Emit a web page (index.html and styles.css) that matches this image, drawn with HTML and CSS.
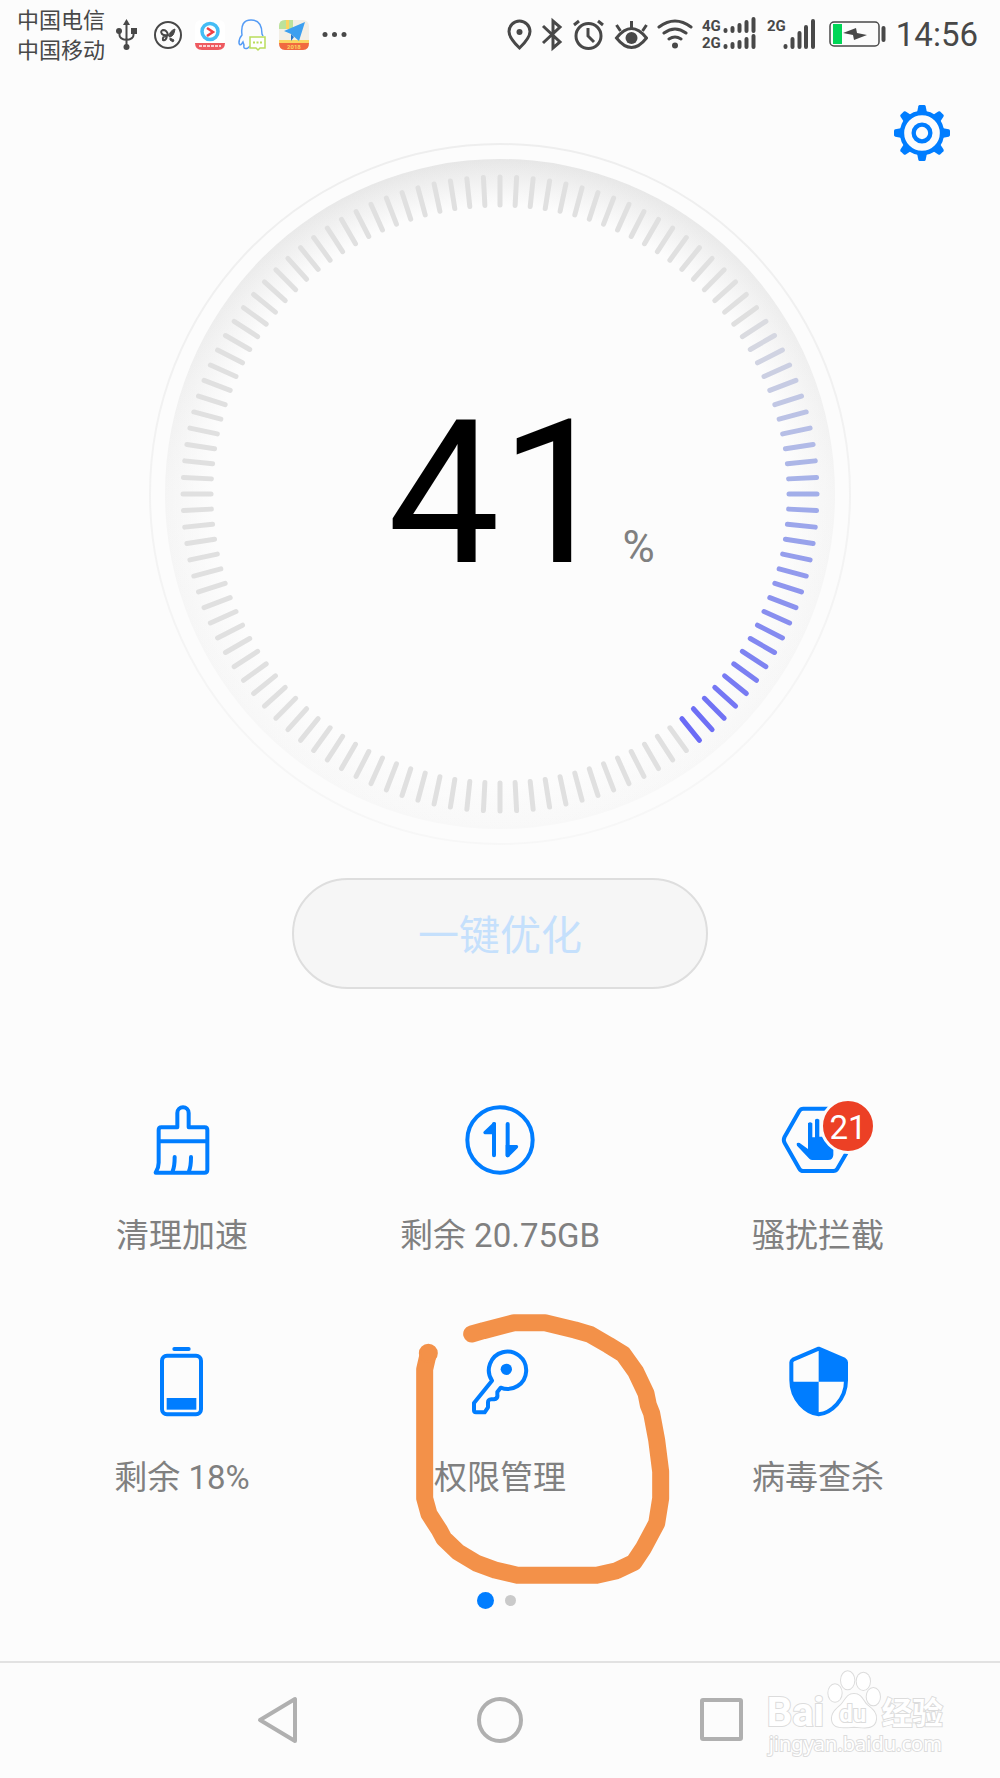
FILE: index.html
```html
<!DOCTYPE html>
<html lang="zh-CN">
<head>
    <meta charset="UTF-8">
    <meta name="viewport" content="width=device-width, initial-scale=1.0">
    <title>手机管家</title>
    <link rel="stylesheet" href="styles.css">
</head>
<body>
    <header class="status-bar">
        <div class="status-left">
            <div class="carrier">
                <span>中国电信</span>
                <span>中国移动</span>
            </div>
            <!-- usb -->
            <svg width="27" height="36" viewBox="115 16 27 36" fill="none" stroke="#484848" stroke-width="2">
                <path d="M126.500 22v24M119.500 30v4q0 4 7 5M133.500 30v4q0 4-7 5"/>
                <path d="M126.500 18l3.500 6h-7z" fill="#484848" stroke="none"/>
                <circle cx="126.500" cy="46" r="3" fill="#484848" stroke="none"/>
                <circle cx="119" cy="30" r="3" fill="#484848" stroke="none"/>
                <path d="M131 27h6v6h-6z" fill="#484848" stroke="none"/>
            </svg>
            <!-- butterfly -->
            <svg width="32" height="36" viewBox="152 16 32 36" fill="none" stroke="#484848">
                <circle cx="168" cy="34" r="13" stroke-width="2"/>
                <path d="M168 34q-1-5-5-5-3 1-1 4 2 2 6 1zM167 35q-5 0-4 4 3 1 4-4z" stroke-width="2"/>
                <path d="M175 28q-6 2-6 8 5 0 6-8zM170 37l4 2-1 2-3-2z" fill="#484848" stroke-width="1"/>
            </svg>
            <!-- video app -->
            <svg width="32" height="36" viewBox="194 16 32 36">
                <rect x="195" y="19" width="30" height="30" rx="6" fill="#fff"/>
                <circle cx="210" cy="30.500" r="8" fill="#fff" stroke="#45bdf5" stroke-width="3.500"/>
                <path d="M207 27l6 4-6 4" fill="none" stroke="#f04046" stroke-width="2.500"/>
                <path d="M195 42h30q0 7-7 7h-16q-7 0-7-7z" fill="#ee5a60"/>
                <path d="M199 45h22" stroke="#fbd0d2" stroke-width="2" stroke-dasharray="3 1"/>
            </svg>
            <!-- chat app -->
            <svg width="32" height="36" viewBox="236 16 32 36" fill="none">
                <path d="M248 47q-5 2-4-3l-1-3q-3 5-4 1 0-5 3-8-2-15 9-15t11 14l1 2M248 47l2-2" stroke="#559cf5" stroke-width="1.500"/>
                <path d="M250 36h15v11h-5l-2 2-2-2h-6z" fill="#fff" stroke="#b9dd5c" stroke-width="1.500"/>
                <path d="M253 41.500h9" stroke="#b9dd5c" stroke-width="2" stroke-dasharray="2 1.500"/>
            </svg>
            <!-- map app -->
            <svg width="32" height="36" viewBox="277 16 32 36">
                <rect x="278" y="19" width="30" height="30" rx="6" fill="#f3efe6"/>
                <path d="M278 28v-3q0-6 6-6h8v9z" fill="#bce29b"/>
                <path d="M278 39h30v3h-30zM285 19h3v9h-3z" fill="#fbd561"/>
                <path d="M278 42h30q0 7-6 7h-18q-6 0-6-7z" fill="#f16a3f"/>
                <path d="M304 21l-21 9 7 3 8 7z" fill="#3c9ff0"/>
                <path d="M290 33v7l3-4z" fill="#2675c8"/>
                <text class="tiny-year" x="286" y="48">2018</text>
            </svg>
            <svg width="32" height="36" viewBox="320 16 32 36" fill="#484848">
                <circle cx="325" cy="33.500" r="2.500"/><circle cx="334.500" cy="33.500" r="2.500"/><circle cx="344" cy="33.500" r="2.500"/>
            </svg>
        </div>

        <div class="status-right">
            <!-- location -->
            <svg width="26" height="36" viewBox="506 16 26 36" fill="none" stroke="#484848" stroke-width="3">
                <path d="M519.500 47q-10.500-10-10.500-16.500a10.500 10.500 0 0 1 21 0q0 6.500-10.500 16.500z"/>
                <circle cx="519.500" cy="31" r="3" fill="#484848" stroke="none"/>
            </svg>
            <!-- bluetooth -->
            <svg width="24" height="36" viewBox="540 16 24 36" fill="none" stroke="#484848" stroke-width="3">
                <path d="M543 25l17 16-7 6V20l7 6-17 16"/>
            </svg>
            <!-- alarm -->
            <svg width="34" height="36" viewBox="572 16 34 36" fill="none" stroke="#484848" stroke-width="3">
                <circle cx="588.500" cy="35" r="12.500"/>
                <path d="M588 27v8l6 6M574 24l5-4M598 20l5 4"/>
            </svg>
            <!-- eye comfort -->
            <svg width="34" height="36" viewBox="614 16 34 36" fill="none" stroke="#484848" stroke-width="3">
                <path d="M616.500 37q15-19 30 0-15 19-30 0z"/>
                <circle cx="631.500" cy="37" r="6" fill="#484848" stroke="none"/>
                <path d="M631.500 20v7M616.500 24l4 6M646.500 24l-4 6"/>
            </svg>
            <!-- wifi -->
            <svg width="38" height="36" viewBox="656 16 38 36" fill="none" stroke="#484848" stroke-width="3" stroke-linecap="round">
                <path d="M659 26q16-12 32 0M664 32q11-8 22 0M669 38q6-4 12 0"/>
                <circle cx="675" cy="44.500" r="3" fill="#484848" stroke="none"/>
            </svg>
            <!-- sim 1 and 2 -->
            <svg width="56" height="36" viewBox="702 16 56 36">
                <text class="net" x="702" y="30">4G</text>
                <text class="net" x="702" y="47">2G</text>
                <path class="bars" d="M725.500 29v1M732.500 27v3M739.500 24v6M746.500 21v9M753.500 18v12M725.500 45v1M732.500 43v3M739.500 41v5M746.500 38v8M753.500 35v11"/>
            </svg>
            <svg width="54" height="36" viewBox="766 16 54 36">
                <text class="net" x="767" y="30">2G</text>
                <path class="bars" d="M785.500 45v1M792.500 38v8M799.500 32v14M806 26v20M813 20v26"/>
            </svg>
            <!-- charging battery -->
            <svg width="60" height="36" viewBox="828 16 60 36">
                <rect x="830" y="21" width="49" height="24" rx="4" fill="none" stroke="#484848" stroke-width="1.500"/>
                <rect x="833" y="23" width="9" height="20" fill="#00d656"/>
                <path d="M843 32l13-5 1 5 10 2-13 5-1-5z" fill="#484848"/>
                <path d="M883.500 27v12" stroke="#484848" stroke-width="4" stroke-linecap="round"/>
            </svg>
            <time class="clock">14:56</time>
        </div>
    </header>

    <main>
        <section class="hero">
            <div class="gauge">
                <svg class="dial" viewBox="-352 -352 704 704">
                    <defs>
                        <linearGradient id="rim" x1="0" y1="0" x2="0" y2="1">
                            <stop offset="0" stop-color="#e6e6e6"/>
                            <stop offset="0.500" stop-color="#f5f5f5"/>
                            <stop offset="1" stop-color="#f8f8f8"/>
                        </linearGradient>
                        <linearGradient id="line" x1="0" y1="0" x2="0" y2="1">
                            <stop offset="0" stop-color="#eeeeee"/>
                            <stop offset="1" stop-color="#f7f7f7"/>
                        </linearGradient>
                        <radialGradient id="core">
                            <stop offset="0.860" stop-color="#fcfcfc"/>
                            <stop offset="1" stop-color="#fcfcfc" stop-opacity="0"/>
                        </radialGradient>
                    </defs>
                    <circle r="350" fill="none" stroke="url(#line)" stroke-width="2"/>
                    <circle r="335" fill="url(#rim)"/>
                    <circle r="336" fill="url(#core)"/>
                    <g id="ticks"></g>
                </svg>
                <div class="score">
                    <span class="score-value">41</span>
                    <span class="score-unit">%</span>
                </div>
            </div>
            <button class="settings" aria-label="设置">
                <svg width="56" height="56" viewBox="102 46 168 168">
                    <g id="teeth" fill="#007dff"></g>
                    <circle cx="186" cy="130" r="60" fill="none" stroke="#007dff" stroke-width="13"/>
                    <circle cx="186" cy="130" r="25" fill="none" stroke="#007dff" stroke-width="13"/>
                </svg>
            </button>
        </section>

        <button class="optimize">一键优化</button>

        <section class="tiles">
            <button class="tile">
                <svg class="icon" viewBox="138 72 216 216">
                    <path d="M232 142v-43a17 17 0 0 1 34 0v43h48q8 0 8 8v119q0 9-9 9H167q9-14 9-30v-98q0-8 8-8zM176 184h146M224 231q0 28-6 42M273 231q0 28-6 42"/>
                </svg>
                <span>清理加速</span>
            </button>
            <button class="tile">
                <svg class="icon" viewBox="1092 72 216 216">
                    <circle cx="1200" cy="180" r="98"/>
                    <path d="M1182 226v-94M1223 132v94"/>
                    <path class="solid" d="M1188 130v33h-34q-7-3-2-9l27-26q6-3 9 2zM1217 228v-33h34q6 3 2 9l-27 27q-6 3-9-3z"/>
                </svg>
                <span>剩余 20.75GB</span>
            </button>
            <button class="tile">
                <span class="icon-wrap">
                    <svg class="icon" viewBox="186 72 216 216">
                        <path d="M250 86h90q8 0 12 7l45 77q5 10 0 19l-45 77q-4 7-12 7h-90q-8 0-12-7l-44-77q-5-9 0-19l44-77q4-7 12-7z"/>
                        <path class="solid" d="M264 207v-77q6-6 13 0v42h8v-53q6-6 13 0v51h8v-45q6-6 13 0v50h8v-25q6-6 13 0v75q-1 15-16 15h-47q-5 0-9-4l-37-39q-4-11 8-8z"/>
                    </svg>
                    <span class="badge">21</span>
                </span>
                <span>骚扰拦截</span>
            </button>
            <button class="tile">
                <svg class="icon" viewBox="138 78 216 216">
                    <rect x="186" y="107" width="117" height="176" rx="15"/>
                    <path d="M223 87h43"/>
                    <path class="solid" d="M200 234h89v35h-89z"/>
                </svg>
                <span>剩余 18%</span>
            </button>
            <button class="tile">
                <svg class="icon" viewBox="192 138 216 216">
                    <path d="M276 242l-54 67v22q0 6 6 6h26l10-15v-12q-1-12 10-12h8q12-2 10-14v-8l10-13a56 56 0 1 0-26-21z"/>
                    <circle class="solid" cx="319" cy="208" r="17"/>
                </svg>
                <span>权限管理</span>
                <svg class="marker" viewBox="0 0 870 960">
                    <path d="M85 160L74 208V595L87 642L118 690L132 716L175 757L230 790L285 810L352 826H590L650 812L702 787L730 745L770 670L782 595V515L770 420L755 340L745 315L738 280L707 215L670 163L625 135L570 103L525 90L435 68H342L250 92L215 102"/>
                    <circle cx="85" cy="160" r="3"/>
                </svg>
            </button>
            <button class="tile">
                <svg class="icon" viewBox="126 78 216 216">
                    <path d="M236 86l77 33q5 3 5 8v54c0 60-46 98-82 102-36-4-82-42-82-102v-54q0-5 5-8z"/>
                    <path class="solid" d="M236 86l82 35v64h-82zM236 185v98c-36-4-80-42-82-98z"/>
                </svg>
                <span>病毒查杀</span>
            </button>
        </section>

        <div class="pager">
            <span class="dot active"></span>
            <span class="dot"></span>
        </div>
    </main>

    <nav class="nav-bar">
        <button aria-label="返回">
            <svg width="52" height="52" viewBox="0 0 52 52"><path d="M43 5v42L8 26z"/></svg>
        </button>
        <button aria-label="主页">
            <svg width="52" height="52" viewBox="0 0 52 52"><circle cx="26" cy="26" r="21"/></svg>
        </button>
        <button aria-label="最近任务">
            <svg width="52" height="52" viewBox="0 0 52 52"><rect x="6" y="6" width="39" height="39" rx="1"/></svg>
        </button>
        <svg class="watermark" viewBox="70 1045 550 270">
            <g class="paw">
                <ellipse cx="285" cy="1120" rx="20" ry="26"/>
                <ellipse cx="323" cy="1082" rx="20" ry="27"/>
                <ellipse cx="370" cy="1085" rx="20" ry="26"/>
                <ellipse cx="400" cy="1131" rx="20" ry="26"/>
                <path d="M342 1123c24 0 26 22 40 34 18 14 28 24 26 42-4 32-38 24-66 22-28 2-62 8-66-20-2-20 12-32 26-44 14-14 18-34 40-34z"/>
            </g>
            <text class="wm-bai" x="80" y="1220">Bai</text>
            <text class="wm-du" x="298" y="1208">du</text>
            <text class="wm-cn" x="425" y="1212">经验</text>
            <text class="wm-url" x="86" y="1294">jingyan.baidu.com</text>
        </svg>
    </nav>

    <script>
        const SVG_NS = 'http://www.w3.org/2000/svg';

        function mix(a, b, t) {
            return 'rgb(' + a.map((v, i) => Math.round(v + (b[i] - v) * t)).join(',') + ')';
        }

        // ticks 18..47 are lit, from grey to violet
        function tickColor(i) {
            if (i < 18 || i > 47) return '#e0e0e0';
            if (i < 30) return mix([223, 223, 223], [162, 174, 233], (i - 18) / 12);
            return mix([162, 174, 233], [107, 107, 246], (i - 30) / 17);
        }

        const ticks = document.getElementById('ticks');
        for (let i = 0; i < 120; i++) {
            const line = document.createElementNS(SVG_NS, 'line');
            line.setAttribute('y1', -317);
            line.setAttribute('y2', -289);
            line.setAttribute('stroke', tickColor(i));
            line.setAttribute('transform', 'rotate(' + i * 3 + ')');
            ticks.appendChild(line);
        }

        const teeth = document.getElementById('teeth');
        for (let i = 0; i < 8; i++) {
            const tooth = document.createElementNS(SVG_NS, 'path');
            tooth.setAttribute('d', 'M179 46h14q3 0 4 4l5 24h-32l5-24q1-4 4-4z');
            tooth.setAttribute('transform', 'rotate(' + i * 45 + ' 186 130)');
            teeth.appendChild(tooth);
        }
    </script>
</body>
</html>
```
FILE: styles.css
```css
* {
    box-sizing: border-box;
}

body {
    margin: 0;
    min-height: 100vh;
    display: flex;
    flex-direction: column;
    background-color: #fcfcfc;
    color: #808080;
    font-family: Roboto, "Noto Sans CJK SC", sans-serif;
}

button {
    padding: 0;
    border: none;
    background: none;
    color: inherit;
    font-family: inherit;
    cursor: pointer;
}

svg {
    display: block;
    flex-shrink: 0;
}

/* status bar */
.status-bar {
    display: flex;
    justify-content: space-between;
    align-items: center;
    height: 69px;
    padding: 0 22px 0 17px;
    color: #484848;
}

.status-left {
    display: flex;
    align-items: center;
    gap: 10px;
}

.status-right {
    display: flex;
    align-items: center;
    gap: 8px;
}

.carrier {
    display: flex;
    flex-direction: column;
    padding-top: 2px;
    font-size: 22px;
    line-height: 30px;
    white-space: nowrap;
}

.clock {
    padding-top: 1px;
    font-size: 33px;
    line-height: 36px;
}

.net {
    font-family: "Liberation Sans Narrow", Roboto, sans-serif;
    font-size: 15px;
    font-weight: bold;
    fill: #484848;
}

.tiny-year {
    font-size: 6px;
    font-weight: bold;
    fill: #fbd561;
}

.bars {
    fill: none;
    stroke: #484848;
    stroke-width: 4;
    stroke-linecap: round;
}

/* score dial, the settings button shares its cell */
main {
    display: flex;
    flex-direction: column;
    align-items: center;
}

.hero {
    display: grid;
    width: 100%;
    padding: 36px 50px 0;
}

.gauge,
.settings {
    grid-area: 1 / 1;
}

.gauge {
    display: grid;
    justify-self: center;
    width: 100%;
    max-width: 704px;
    margin-top: 37px;
}

.dial,
.score {
    grid-area: 1 / 1;
}

.dial {
    width: 100%;
}

#ticks {
    stroke-width: 5;
    stroke-linecap: round;
}

.score {
    display: grid;
    grid-template-columns: 1fr auto 1fr;
    align-items: baseline;
    align-self: center;
    column-gap: 10px;
}

.score-value {
    grid-column: 2;
    color: #000;
    font-size: 200px;
    line-height: 240px;
}

.score-unit {
    font-size: 44px;
}

.settings {
    justify-self: end;
    align-self: start;
}

.optimize {
    width: 416px;
    max-width: 90%;
    height: 111px;
    margin-top: 32px;
    padding-bottom: 3px;
    border: 2px solid #dedede;
    border-radius: 56px;
    background-color: #f6f6f6;
    color: #c5e0fc;
    font-size: 41px;
}

/* function tiles */
.tiles {
    display: grid;
    grid-template-columns: repeat(3, 1fr);
    row-gap: 90px;
    width: 100%;
    margin-top: 115px;
    padding: 0 23px;
}

.tile {
    position: relative;
    display: flex;
    flex-direction: column;
    align-items: center;
    gap: 40px;
    font-size: 33px;
    line-height: 40px;
}

.icon {
    width: 72px;
    height: 72px;
    overflow: visible;
    fill: none;
    stroke: #007dff;
    stroke-width: 12;
    stroke-linecap: round;
    stroke-linejoin: round;
}

.icon .solid {
    fill: #007dff;
    stroke: none;
}

.icon-wrap {
    position: relative;
}

.badge {
    position: absolute;
    top: -6px;
    right: -22px;
    width: 56px;
    height: 56px;
    border: 3px solid #fcfcfc;
    border-radius: 50%;
    background-color: #ec4025;
    color: #fff;
    font-size: 33px;
    line-height: 53px;
}

.marker {
    position: absolute;
    top: -46px;
    left: 50%;
    width: 290px;
    height: 320px;
    margin-left: -100px;
    fill: none;
    stroke: #f39149;
    stroke-width: 51;
    stroke-linecap: round;
    stroke-linejoin: round;
    pointer-events: none;
}

.pager {
    display: flex;
    align-items: center;
    gap: 11px;
    margin-top: 94px;
    padding-right: 7px;
}

.dot {
    width: 11px;
    height: 11px;
    border-radius: 50%;
    background-color: #cacaca;
}

.dot.active {
    width: 17px;
    height: 17px;
    background-color: #007dff;
}

/* navigation bar */
.nav-bar {
    position: relative;
    display: flex;
    justify-content: center;
    align-items: center;
    gap: 170px;
    height: 117px;
    margin-top: auto;
    padding-bottom: 2px;
    border-top: 2px solid #e2e2e2;
}

.nav-bar button svg {
    fill: none;
    stroke: #b0b0b0;
    stroke-width: 4;
    stroke-linejoin: round;
}

.watermark {
    position: absolute;
    top: 5px;
    right: 53px;
    width: 184px;
    height: 90px;
    fill: #fff;
    stroke: #dcdcdc;
    stroke-width: 6;
    paint-order: stroke;
    pointer-events: none;
}

.wm-bai {
    font-size: 120px;
    font-weight: bold;
}

.wm-du {
    font-size: 72px;
    font-weight: bold;
}

.wm-cn {
    font-size: 92px;
    font-weight: bold;
}

.wm-url {
    font-family: "Noto Sans", sans-serif;
    font-size: 60px;
}
```
